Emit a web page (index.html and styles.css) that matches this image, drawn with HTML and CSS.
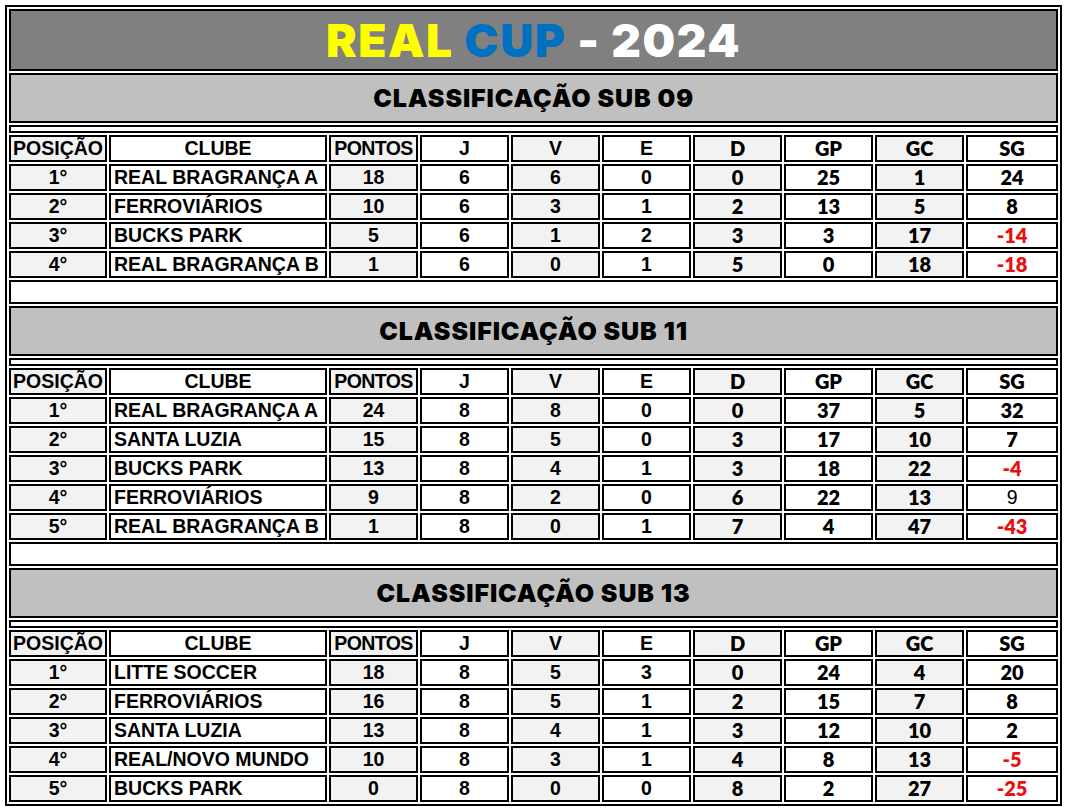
FILE: index.html
```html
<!DOCTYPE html>
<html lang="pt-BR">
<head>
<meta charset="utf-8">
<title>REAL CUP - 2024</title>
<link rel="stylesheet" href="styles.css">
</head>
<body>
<table class="board">
  <colgroup>
    <col class="c-pos"><col class="c-club"><col class="c-num"><col class="c-num"><col class="c-num"><col class="c-num"><col class="c-num"><col class="c-num"><col class="c-num"><col class="c-sg">
  </colgroup>
  <tbody>
    <tr><td colspan="10" class="title"><span class="y">REAL</span> <span class="b">CUP</span> <span class="w">- 2024</span></td></tr>

    <tr><td colspan="10" class="section">CLASSIFICAÇÃO SUB 09</td></tr>
    <tr><td colspan="10" class="thin"></td></tr>
    <tr class="head"><td class="g">POSIÇÃO</td><td>CLUBE</td><td class="g tight">PONTOS</td><td>J</td><td class="g">V</td><td>E</td><td class="g cal">D</td><td class="cal">GP</td><td class="g cal">GC</td><td class="cal">SG</td></tr>
    <tr><td class="g">1°</td><td class="club">REAL BRAGRANÇA A</td><td class="g">18</td><td>6</td><td class="g">6</td><td>0</td><td class="g cal">0</td><td class="cal">25</td><td class="g cal">1</td><td class="cal">24</td></tr>
    <tr><td class="g">2°</td><td class="club">FERROVIÁRIOS</td><td class="g">10</td><td>6</td><td class="g">3</td><td>1</td><td class="g cal">2</td><td class="cal">13</td><td class="g cal">5</td><td class="cal">8</td></tr>
    <tr><td class="g">3°</td><td class="club">BUCKS PARK</td><td class="g">5</td><td>6</td><td class="g">1</td><td>2</td><td class="g cal">3</td><td class="cal">3</td><td class="g cal">17</td><td class="cal neg">-14</td></tr>
    <tr><td class="g">4°</td><td class="club">REAL BRAGRANÇA B</td><td class="g">1</td><td>6</td><td class="g">0</td><td>1</td><td class="g cal">5</td><td class="cal">0</td><td class="g cal">18</td><td class="cal neg">-18</td></tr>
    <tr><td colspan="10" class="gap"></td></tr>

    <tr><td colspan="10" class="section">CLASSIFICAÇÃO SUB 11</td></tr>
    <tr><td colspan="10" class="thin"></td></tr>
    <tr class="head"><td class="g">POSIÇÃO</td><td>CLUBE</td><td class="g tight">PONTOS</td><td>J</td><td class="g">V</td><td>E</td><td class="g cal">D</td><td class="cal">GP</td><td class="g cal">GC</td><td class="cal">SG</td></tr>
    <tr><td class="g">1°</td><td class="club">REAL BRAGRANÇA A</td><td class="g">24</td><td>8</td><td class="g">8</td><td>0</td><td class="g cal">0</td><td class="cal">37</td><td class="g cal">5</td><td class="cal">32</td></tr>
    <tr><td class="g">2°</td><td class="club">SANTA LUZIA</td><td class="g">15</td><td>8</td><td class="g">5</td><td>0</td><td class="g cal">3</td><td class="cal">17</td><td class="g cal">10</td><td class="cal">7</td></tr>
    <tr><td class="g">3°</td><td class="club">BUCKS PARK</td><td class="g">13</td><td>8</td><td class="g">4</td><td>1</td><td class="g cal">3</td><td class="cal">18</td><td class="g cal">22</td><td class="cal neg">-4</td></tr>
    <tr><td class="g">4°</td><td class="club">FERROVIÁRIOS</td><td class="g">9</td><td>8</td><td class="g">2</td><td>0</td><td class="g cal">6</td><td class="cal">22</td><td class="g cal">13</td><td class="plain">9</td></tr>
    <tr><td class="g">5°</td><td class="club">REAL BRAGRANÇA B</td><td class="g">1</td><td>8</td><td class="g">0</td><td>1</td><td class="g cal">7</td><td class="cal">4</td><td class="g cal">47</td><td class="cal neg">-43</td></tr>
    <tr><td colspan="10" class="gap"></td></tr>

    <tr><td colspan="10" class="section">CLASSIFICAÇÃO SUB 13</td></tr>
    <tr><td colspan="10" class="thin"></td></tr>
    <tr class="head"><td class="g">POSIÇÃO</td><td>CLUBE</td><td class="g tight">PONTOS</td><td>J</td><td class="g">V</td><td>E</td><td class="g cal">D</td><td class="cal">GP</td><td class="g cal">GC</td><td class="cal">SG</td></tr>
    <tr><td class="g">1°</td><td class="club">LITTE SOCCER</td><td class="g">18</td><td>8</td><td class="g">5</td><td>3</td><td class="g cal">0</td><td class="cal">24</td><td class="g cal">4</td><td class="cal">20</td></tr>
    <tr><td class="g">2°</td><td class="club">FERROVIÁRIOS</td><td class="g">16</td><td>8</td><td class="g">5</td><td>1</td><td class="g cal">2</td><td class="cal">15</td><td class="g cal">7</td><td class="cal">8</td></tr>
    <tr><td class="g">3°</td><td class="club">SANTA LUZIA</td><td class="g">13</td><td>8</td><td class="g">4</td><td>1</td><td class="g cal">3</td><td class="cal">12</td><td class="g cal">10</td><td class="cal">2</td></tr>
    <tr><td class="g">4°</td><td class="club">REAL/NOVO MUNDO</td><td class="g">10</td><td>8</td><td class="g">3</td><td>1</td><td class="g cal">4</td><td class="cal">8</td><td class="g cal">13</td><td class="cal neg">-5</td></tr>
    <tr><td class="g">5°</td><td class="club">BUCKS PARK</td><td class="g">0</td><td>8</td><td class="g">0</td><td>0</td><td class="g cal">8</td><td class="cal">2</td><td class="g cal">27</td><td class="cal neg">-25</td></tr>
  </tbody>
</table>
</body>
</html>
```

FILE: styles.css
```css
html, body {
  background: #fff;
}
body {
  margin: 5px 0 0 5px;
  font-family: "Liberation Sans", Arial, sans-serif;
  color: #000;
}
.board {
  width: 1057px;
  table-layout: fixed;
  border: 2px solid #000;
  border-collapse: separate;
  border-spacing: 2px;
  background: #fff;
}
.c-pos { width: 98px; }
.c-club { width: 218px; }
.c-num { width: 89px; }
.c-sg { width: 92px; }

.board td {
  border: 2px solid #000;
  padding: 0;
  height: 23px;
  text-align: center;
  vertical-align: middle;
  font-weight: bold;
  font-size: 19.5px;
  line-height: 23px;
  background: #fff;
  white-space: nowrap;
  overflow: hidden;
}
.board td.g { background: #f2f2f2; }
.board td.club {
  text-align: left;
  padding-left: 3px;
}
.board td.tight { letter-spacing: -0.6px; }
.board td.cal {
  font-family: Lato, "Open Sans", sans-serif;
  font-size: 20px;
  font-weight: 800;
}
.board td.neg { color: #e8100f; }
.board td.plain { font-weight: normal; }

.board td.title {
  height: 58px;
  background: #808080;
  font-family: Inter, "Open Sans", sans-serif;
  font-weight: 900;
  font-size: 46px;
  line-height: 58px;
  letter-spacing: 1.5px;
}
.title .y { color: #ffff00; }
.title .b { color: #0070c0; }
.title .w { color: #ffffff; }

.board td.section {
  height: 46px;
  background: #c0c0c0;
  font-family: Inter, "Open Sans", sans-serif;
  font-weight: 900;
  font-size: 25px;
  line-height: 46px;
  letter-spacing: 0.9px;
}
.board td.thin {
  height: 4px;
  line-height: 4px;
  font-size: 0;
}
.board td.gap {
  height: 20px;
  line-height: 20px;
}
```
